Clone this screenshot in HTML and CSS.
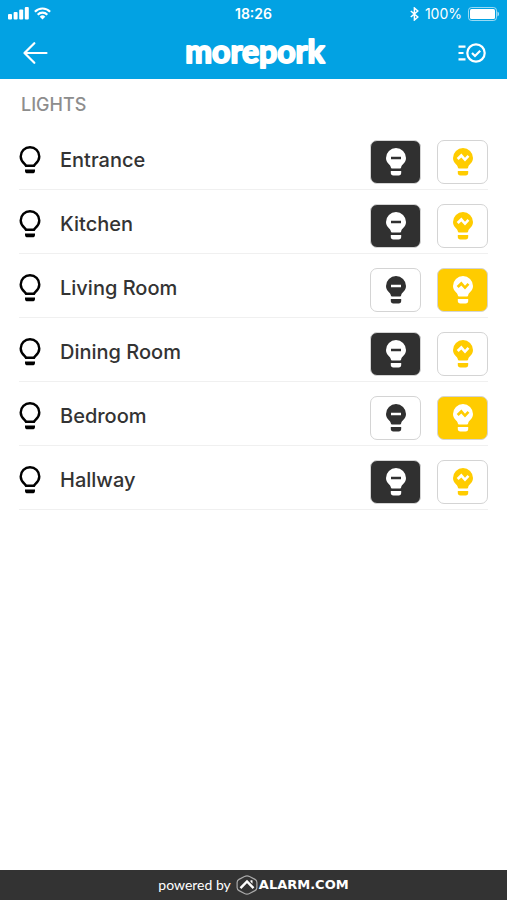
FILE: index.html
```html
<!DOCTYPE html>
<html lang="en">
<head>
<meta charset="utf-8">
<meta name="viewport" content="width=device-width, initial-scale=1">
<title>Lights</title>
<link rel="stylesheet" href="styles.css">
</head>
<body>
<svg class="sprite" aria-hidden="true">
  <symbol id="bulb-outline" viewBox="0 0 22 28">
    <path d="M7 19.800h8c.5-1.700 5.300-3.900 5.300-9.400a9.300 9.200 0 0 0-18.600 0c0 5.500 4.800 7.700 5.300 9.400z" fill="none" stroke="currentColor" stroke-width="2.400" stroke-linejoin="round"/>
    <path d="M6 23.600h10v1.100q0 2.600-2.600 2.600H8.600q-2.600 0-2.600-2.600z" fill="currentColor"/>
  </symbol>
  <symbol id="bulb-off" viewBox="0 0 20 28">
    <path fill-rule="evenodd" d="M10 0a10 10 0 0 1 10 10c0 5-4.600 6.500-4.800 9.200q-.1 1.300-1.400 1.300H6.200q-1.300 0-1.400-1.300C4.600 16.500 0 15 0 10A10 10 0 0 1 10 0zM5 8.800v2.400h10V8.800z" fill="currentColor"/>
    <path d="M4.800 23h10.400v1.800q0 2.600-2.600 2.600H7.400q-2.600 0-2.600-2.600z" fill="currentColor"/>
  </symbol>
  <symbol id="bulb-on" viewBox="0 0 20 28">
    <path fill-rule="evenodd" d="M10 0a10 10 0 0 1 10 10c0 5-4.600 6.500-4.800 9.200q-.1 1.300-1.400 1.300H6.200q-1.300 0-1.400-1.300C4.600 16.500 0 15 0 10A10 10 0 0 1 10 0zM3.700 10l1.900 1.900 2.700-2.400 3.700 4.100 4.400-4.800-1.900-1.800-2.500 2.700-3.600-4.100z" fill="currentColor"/>
    <path d="M4.800 23h10.400v1.800q0 2.600-2.600 2.600H7.400q-2.600 0-2.600-2.600z" fill="currentColor"/>
  </symbol>
</svg>

<header class="top">
  <div class="status">
    <div class="status-left">
      <svg width="21" height="13" viewBox="0 0 21 13" fill="currentColor" aria-hidden="true">
        <rect x="0" y="7" width="4" height="5.500" rx="1"/><rect x="5.600" y="5" width="4" height="7.500" rx="1"/><rect x="11.200" y="2.500" width="4" height="10" rx="1"/><rect x="16.800" y="0" width="4" height="12.500" rx="1"/>
      </svg>
      <svg width="17" height="13" viewBox="0 0 17 13" fill="none" stroke="currentColor" stroke-width="2.200" aria-hidden="true">
        <path d="M.9 4.700a10.600 10.600 0 0 1 15.200 0M3.700 7.700a6.700 6.700 0 0 1 9.600 0"/>
        <path d="M5.700 9.700a4 4 0 0 1 5.600 0L8.500 12.600z" fill="currentColor" stroke="none"/>
      </svg>
    </div>
    <time class="clock">18:26</time>
    <div class="status-right">
      <svg width="9" height="14" viewBox="0 0 9 14" fill="none" stroke="currentColor" stroke-width="1.500" aria-hidden="true">
        <path d="M.8 4l7 6-3.400 3V1l3.400 3-7 6"/>
      </svg>
      <span>100%</span>
      <svg width="31" height="14" viewBox="0 0 31 14" fill="currentColor" aria-hidden="true">
        <rect x=".5" y=".5" width="28" height="13" rx="3" fill="none" stroke="currentColor" stroke-opacity=".6"/>
        <rect x="2" y="2" width="25" height="10" rx="1.500"/><path d="M29.500 4.500q1.500.8 1.500 2.500t-1.500 2.500z" opacity=".7"/>
      </svg>
    </div>
  </div>
  <nav class="bar">
    <button class="icon-button" type="button" aria-label="Back">
      <svg width="25" height="22" viewBox="0 0 25 22" fill="none" stroke="currentColor" stroke-width="2.200" stroke-linecap="round" stroke-linejoin="round" aria-hidden="true"><path d="M23.500 11H1.500M11.300 1.200L1.500 11l9.800 9.800"/></svg>
    </button>
    <svg class="brand" width="160" height="52" viewBox="0 0 160 52"><text x="80" y="36" text-anchor="middle">morepork</text></svg>
    <button class="icon-button end" type="button" aria-label="Activity">
      <svg width="28" height="20" viewBox="0 0 28 20" fill="none" stroke="currentColor" stroke-width="2.200" aria-hidden="true"><circle cx="18" cy="10" r="8.700"/><path d="M14 10l3 3 5.200-5.200M.5 3.700h7M.5 10h5M.5 16.300h7"/></svg>
    </button>
  </nav>
</header>

<main class="content">
  <h1 class="section-title">LIGHTS</h1>
  <ul class="lights">
    <li class="light">
      <div class="label"><svg class="outline" aria-hidden="true"><use href="#bulb-outline"/></svg><span>Entrance</span></div>
      <button class="toggle off" type="button" aria-pressed="true" aria-label="Entrance off"><svg class="bulb" aria-hidden="true"><use href="#bulb-off"/></svg></button>
      <button class="toggle on" type="button" aria-pressed="false" aria-label="Entrance on"><svg class="bulb" aria-hidden="true"><use href="#bulb-on"/></svg></button>
    </li>
    <li class="light">
      <div class="label"><svg class="outline" aria-hidden="true"><use href="#bulb-outline"/></svg><span>Kitchen</span></div>
      <button class="toggle off" type="button" aria-pressed="true" aria-label="Kitchen off"><svg class="bulb" aria-hidden="true"><use href="#bulb-off"/></svg></button>
      <button class="toggle on" type="button" aria-pressed="false" aria-label="Kitchen on"><svg class="bulb" aria-hidden="true"><use href="#bulb-on"/></svg></button>
    </li>
    <li class="light">
      <div class="label"><svg class="outline" aria-hidden="true"><use href="#bulb-outline"/></svg><span>Living Room</span></div>
      <button class="toggle off" type="button" aria-pressed="false" aria-label="Living Room off"><svg class="bulb" aria-hidden="true"><use href="#bulb-off"/></svg></button>
      <button class="toggle on" type="button" aria-pressed="true" aria-label="Living Room on"><svg class="bulb" aria-hidden="true"><use href="#bulb-on"/></svg></button>
    </li>
    <li class="light">
      <div class="label"><svg class="outline" aria-hidden="true"><use href="#bulb-outline"/></svg><span>Dining Room</span></div>
      <button class="toggle off" type="button" aria-pressed="true" aria-label="Dining Room off"><svg class="bulb" aria-hidden="true"><use href="#bulb-off"/></svg></button>
      <button class="toggle on" type="button" aria-pressed="false" aria-label="Dining Room on"><svg class="bulb" aria-hidden="true"><use href="#bulb-on"/></svg></button>
    </li>
    <li class="light">
      <div class="label"><svg class="outline" aria-hidden="true"><use href="#bulb-outline"/></svg><span>Bedroom</span></div>
      <button class="toggle off" type="button" aria-pressed="false" aria-label="Bedroom off"><svg class="bulb" aria-hidden="true"><use href="#bulb-off"/></svg></button>
      <button class="toggle on" type="button" aria-pressed="true" aria-label="Bedroom on"><svg class="bulb" aria-hidden="true"><use href="#bulb-on"/></svg></button>
    </li>
    <li class="light">
      <div class="label"><svg class="outline" aria-hidden="true"><use href="#bulb-outline"/></svg><span>Hallway</span></div>
      <button class="toggle off" type="button" aria-pressed="true" aria-label="Hallway off"><svg class="bulb" aria-hidden="true"><use href="#bulb-off"/></svg></button>
      <button class="toggle on" type="button" aria-pressed="false" aria-label="Hallway on"><svg class="bulb" aria-hidden="true"><use href="#bulb-on"/></svg></button>
    </li>
  </ul>
</main>

<footer class="footer">
  <span class="powered">powered by</span>
  <svg width="22" height="20" viewBox="0 0 22 20" fill="none" aria-hidden="true">
    <path d="M8.500 1.500Q11 .2 13.500 1.500l5.500 2.900q1.900 1 1.900 3v5.200q0 2-1.900 3l-5.500 2.900q-2.500 1.300-5 0L3 15.600q-1.900-1-1.900-3V7.400q0-2 1.900-3z" stroke="#aaa" stroke-width="1.200"/>
    <path d="M4.500 13.200L11 6.500l6.500 6.700" stroke="#fff" stroke-width="2.400"/><path d="M14.500 5.200h2v3.500l-2-2z" fill="#fff"/>
  </svg>
  <span class="vendor">ALARM.COM</span>
</footer>
</body>
</html>
```
FILE: styles.css
```css
* { box-sizing: border-box; }

body {
  margin: 0;
  min-height: 100vh;
  display: flex;
  flex-direction: column;
  background: #fff;
  color: #333;
  font-family: Inter, "Liberation Sans", sans-serif;
}

svg { display: block; flex: none; }
button { padding: 0; background: none; color: inherit; cursor: pointer; }

.sprite { position: absolute; width: 0; height: 0; }

.top { background: #02a2e3; color: #fff; }

.status {
  display: grid;
  grid-template-columns: 1fr auto 1fr;
  align-items: center;
  height: 27px;
  padding: 0 8px;
  font-size: 14px;
}
.status-left { display: flex; gap: 5px; }
.status-right { display: flex; align-items: center; justify-content: flex-end; gap: 6px; }
.clock { font-weight: 600; }

.bar {
  display: grid;
  grid-template-columns: 1fr auto 1fr;
  align-items: center;
  height: 52px;
  padding: 0 21px 0 23px;
}
.icon-button { border: 0; justify-self: start; }
.icon-button.end { justify-self: end; }
.brand {
  font: 700 32px Lato, sans-serif;
  fill: #fff;
  stroke: #fff;
  stroke-width: 2px;
  stroke-linejoin: round;
}

.content { flex: 1; padding: 0 19px 20px; }

.section-title {
  margin: 0;
  padding: 16px 2px 11px;
  color: #8d8d8d;
  font-size: 18px;
  font-weight: 500;
  line-height: 20px;
}

.lights { margin: 0; padding: 0; list-style: none; }

.light {
  display: flex;
  align-items: center;
  gap: 16px;
  height: 64px;
  padding-top: 8px;
  border-bottom: 1px solid #f0f0f0;
}
.label {
  flex: 1;
  display: flex;
  align-items: center;
  gap: 19px;
  padding-bottom: 4px;
  font-size: 20px;
  font-weight: 500;
  line-height: 28px;
}
.outline { width: 22px; height: 28px; color: #000; }
.bulb { width: 20px; height: 28px; }

.toggle {
  display: grid;
  place-items: center;
  width: 51px;
  height: 44px;
  border: 1px solid #d4d4d4;
  border-radius: 7px;
  background: #fff;
}
.toggle.off { color: #303030; }
.toggle.on { color: #fc0; }
.toggle[aria-pressed="true"] { color: #fff; }
.off[aria-pressed="true"] { background: #303030; }
.on[aria-pressed="true"] { background: #fc0; }

.footer {
  display: flex;
  align-items: center;
  justify-content: center;
  height: 30px;
  background: #333;
  color: #fff;
}
.powered { margin-right: 5px; font: 14px/20px Lato, sans-serif; }
.vendor { margin-left: 1px; font: 700 13px/20px "DejaVu Sans", sans-serif; }
```
